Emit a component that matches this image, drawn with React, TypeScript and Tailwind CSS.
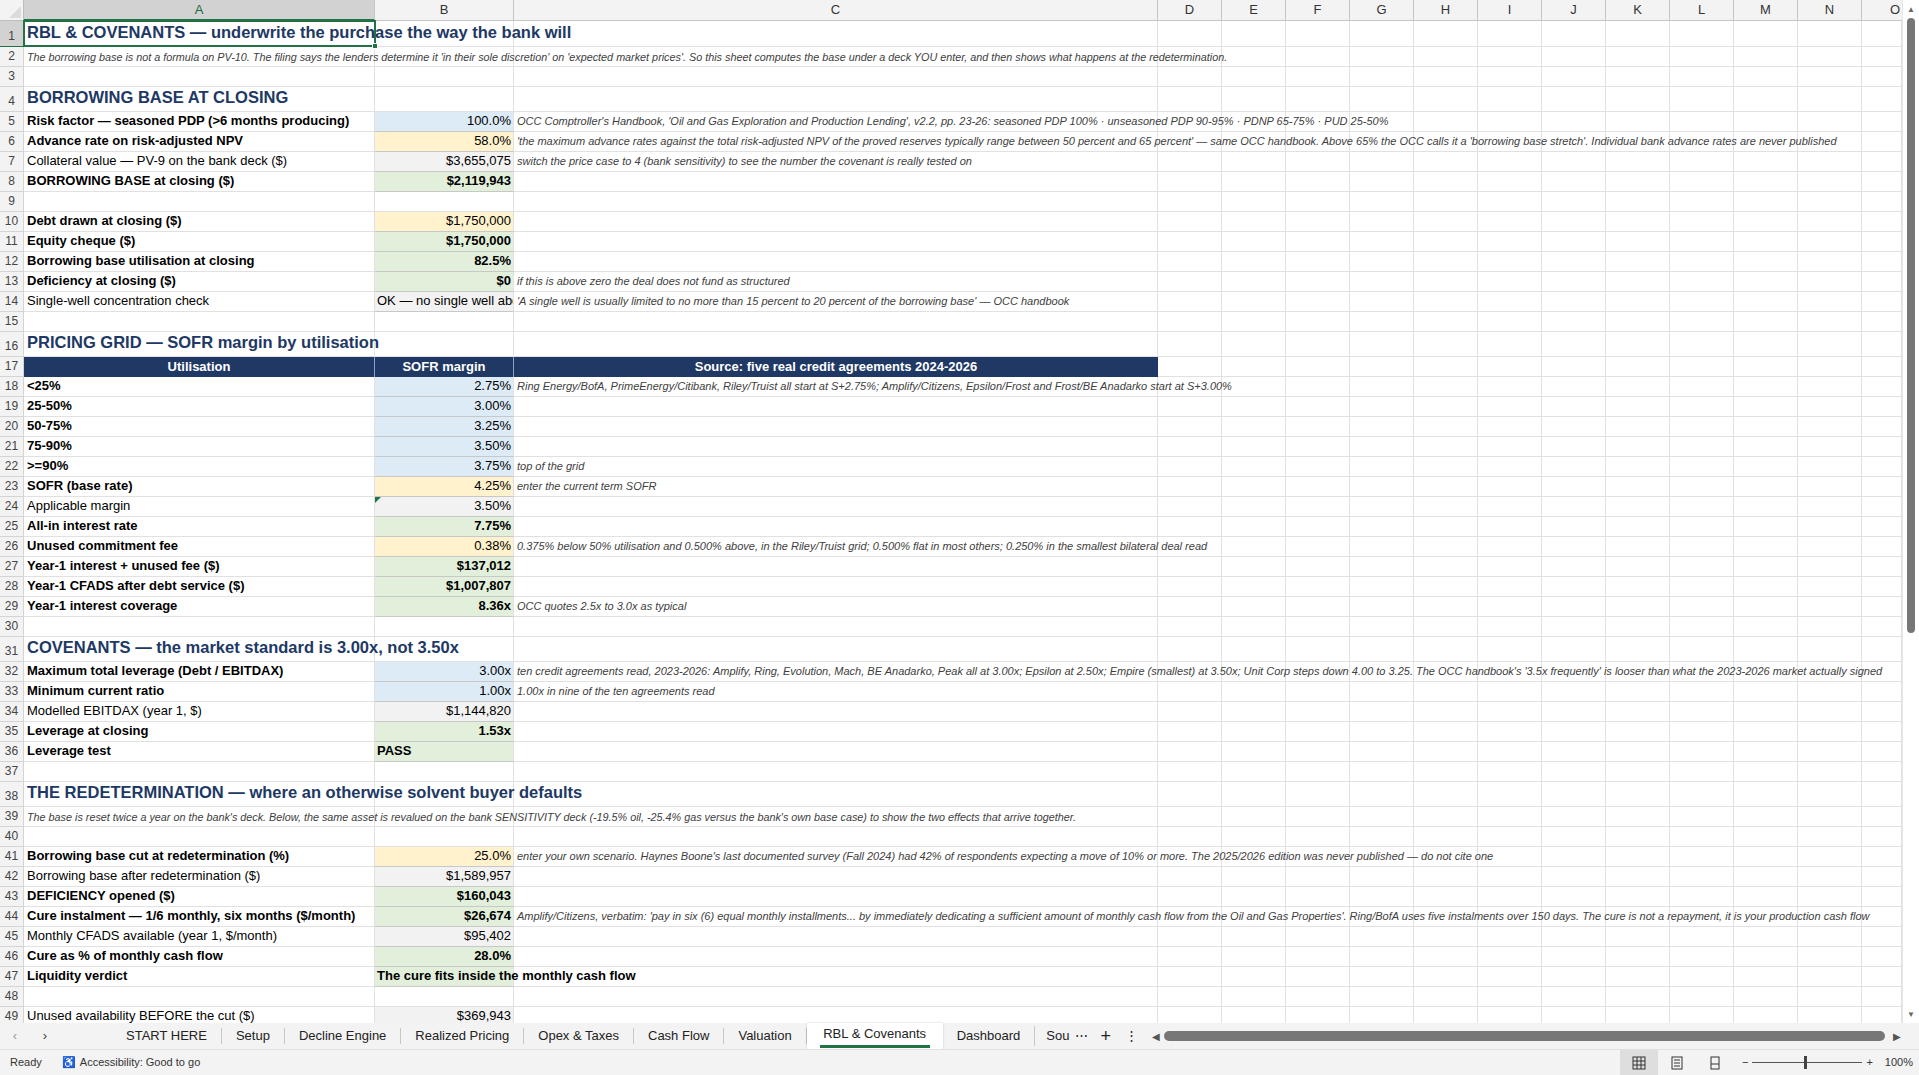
import React from "react";

type R = { n: number; h?: number; a?: string; ab?: boolean; title?: boolean; sub?: boolean; b?: string; bb?: boolean; bg?: string; bl?: boolean; c?: string; hdr?: boolean; tri?: boolean };
const BLUE = "bg-[#ddebf7]", YEL = "bg-[#fff2cc]", GRY = "bg-[#f2f2f2]", GRN = "bg-[#e2efda]";
const rows: R[] = [
  { n: 1, h: 26, a: "RBL & COVENANTS — underwrite the purchase the way the bank will", title: true },
  { n: 2, a: "The borrowing base is not a formula on PV-10. The filing says the lenders determine it 'in their sole discretion' on 'expected market prices'. So this sheet computes the base under a deck YOU enter, and then shows what happens at the redetermination.", sub: true },
  { n: 3 },
  { n: 4, h: 25, a: "BORROWING BASE AT CLOSING", title: true },
  { n: 5, a: "Risk factor — seasoned PDP (>6 months producing)", ab: true, b: "100.0%", bg: BLUE, c: "OCC Comptroller's Handbook, 'Oil and Gas Exploration and Production Lending', v2.2, pp. 23-26: seasoned PDP 100% · unseasoned PDP 90-95% · PDNP 65-75% · PUD 25-50%" },
  { n: 6, a: "Advance rate on risk-adjusted NPV", ab: true, b: "58.0%", bg: YEL, c: "'the maximum advance rates against the total risk-adjusted NPV of the proved reserves typically range between 50 percent and 65 percent' — same OCC handbook. Above 65% the OCC calls it a 'borrowing base stretch'. Individual bank advance rates are never published" },
  { n: 7, a: "Collateral value — PV-9 on the bank deck ($)", b: "$3,655,075", bg: GRY, c: "switch the price case to 4 (bank sensitivity) to see the number the covenant is really tested on" },
  { n: 8, a: "BORROWING BASE at closing ($)", ab: true, b: "$2,119,943", bb: true, bg: GRN },
  { n: 9 },
  { n: 10, a: "Debt drawn at closing ($)", ab: true, b: "$1,750,000", bg: YEL },
  { n: 11, a: "Equity cheque ($)", ab: true, b: "$1,750,000", bb: true, bg: GRN },
  { n: 12, a: "Borrowing base utilisation at closing", ab: true, b: "82.5%", bb: true, bg: GRN },
  { n: 13, a: "Deficiency at closing ($)", ab: true, b: "$0", bb: true, bg: GRN, c: "if this is above zero the deal does not fund as structured" },
  { n: 14, a: "Single-well concentration check", b: "OK — no single well above 20%", bg: GRY, bl: true, c: "'A single well is usually limited to no more than 15 percent to 20 percent of the borrowing base' — OCC handbook" },
  { n: 15 },
  { n: 16, h: 25, a: "PRICING GRID — SOFR margin by utilisation", title: true },
  { n: 17, hdr: true },
  { n: 18, a: "<25%", ab: true, b: "2.75%", bg: BLUE, c: "Ring Energy/BofA, PrimeEnergy/Citibank, Riley/Truist all start at S+2.75%; Amplify/Citizens, Epsilon/Frost and Frost/BE Anadarko start at S+3.00%" },
  { n: 19, a: "25-50%", ab: true, b: "3.00%", bg: BLUE },
  { n: 20, a: "50-75%", ab: true, b: "3.25%", bg: BLUE },
  { n: 21, a: "75-90%", ab: true, b: "3.50%", bg: BLUE },
  { n: 22, a: ">=90%", ab: true, b: "3.75%", bg: BLUE, c: "top of the grid" },
  { n: 23, a: "SOFR (base rate)", ab: true, b: "4.25%", bg: YEL, c: "enter the current term SOFR" },
  { n: 24, a: "Applicable margin", b: "3.50%", bg: GRY, tri: true },
  { n: 25, a: "All-in interest rate", ab: true, b: "7.75%", bb: true, bg: GRN },
  { n: 26, a: "Unused commitment fee", ab: true, b: "0.38%", bg: YEL, c: "0.375% below 50% utilisation and 0.500% above, in the Riley/Truist grid; 0.500% flat in most others; 0.250% in the smallest bilateral deal read" },
  { n: 27, a: "Year-1 interest + unused fee ($)", ab: true, b: "$137,012", bb: true, bg: GRN },
  { n: 28, a: "Year-1 CFADS after debt service ($)", ab: true, b: "$1,007,807", bb: true, bg: GRN },
  { n: 29, a: "Year-1 interest coverage", ab: true, b: "8.36x", bb: true, bg: GRN, c: "OCC quotes 2.5x to 3.0x as typical" },
  { n: 30 },
  { n: 31, h: 25, a: "COVENANTS — the market standard is 3.00x, not 3.50x", title: true },
  { n: 32, a: "Maximum total leverage (Debt / EBITDAX)", ab: true, b: "3.00x", bg: BLUE, c: "ten credit agreements read, 2023-2026: Amplify, Ring, Evolution, Mach, BE Anadarko, Peak all at 3.00x; Epsilon at 2.50x; Empire (smallest) at 3.50x; Unit Corp steps down 4.00 to 3.25. The OCC handbook's '3.5x frequently' is looser than what the 2023-2026 market actually signed" },
  { n: 33, a: "Minimum current ratio", ab: true, b: "1.00x", bg: BLUE, c: "1.00x in nine of the ten agreements read" },
  { n: 34, a: "Modelled EBITDAX (year 1, $)", b: "$1,144,820", bg: GRY },
  { n: 35, a: "Leverage at closing", ab: true, b: "1.53x", bb: true, bg: GRN },
  { n: 36, a: "Leverage test", ab: true, b: "PASS", bb: true, bg: GRN, bl: true },
  { n: 37 },
  { n: 38, h: 25, a: "THE REDETERMINATION — where an otherwise solvent buyer defaults", title: true },
  { n: 39, a: "The base is reset twice a year on the bank's deck. Below, the same asset is revalued on the bank SENSITIVITY deck (-19.5% oil, -25.4% gas versus the bank's own base case) to show the two effects that arrive together.", sub: true },
  { n: 40 },
  { n: 41, a: "Borrowing base cut at redetermination (%)", ab: true, b: "25.0%", bg: YEL, c: "enter your own scenario. Haynes Boone's last documented survey (Fall 2024) had 42% of respondents expecting a move of 10% or more. The 2025/2026 edition was never published — do not cite one" },
  { n: 42, a: "Borrowing base after redetermination ($)", b: "$1,589,957", bg: GRY },
  { n: 43, a: "DEFICIENCY opened ($)", ab: true, b: "$160,043", bb: true, bg: GRN },
  { n: 44, a: "Cure instalment — 1/6 monthly, six months ($/month)", ab: true, b: "$26,674", bb: true, bg: GRN, c: "Amplify/Citizens, verbatim: 'pay in six (6) equal monthly installments... by immediately dedicating a sufficient amount of monthly cash flow from the Oil and Gas Properties'. Ring/BofA uses five instalments over 150 days. The cure is not a repayment, it is your production cash flow" },
  { n: 45, a: "Monthly CFADS available (year 1, $/month)", b: "$95,402", bg: GRY },
  { n: 46, a: "Cure as % of monthly cash flow", ab: true, b: "28.0%", bb: true, bg: GRN },
  { n: 47, a: "Liquidity verdict", ab: true, b: "The cure fits inside the monthly cash flow", bb: true, bg: GRN, bl: true },
  { n: 48 },
  { n: 49, a: "Unused availability BEFORE the cut ($)", b: "$369,943", bg: GRY },
];
const extra = ["D", "E", "F", "G", "H", "I", "J", "K", "L", "M", "N"];
const line = "border-r border-b border-[#e1e1e1]";

function Row({ r }: { r: R }) {
  const h = r.h ?? 20;
  const overB = r.n === 47;
  return (
    <div className="flex" style={{ height: h }}>
      <div className={`w-[24px] shrink-0 flex items-end justify-center pb-[1px] text-[12px] text-[#444] border-r border-b border-[#d4d4d4] ${r.n === 1 ? "bg-[#d2d2d2] text-[#1e6b3c] border-b-[#217346]" : "bg-[#f3f3f3]"}`}>{r.n}</div>
      {r.hdr ? (
        <>
          <div className="w-[351px] shrink-0 bg-[#203864] text-white font-bold text-[13px] flex items-center justify-center border-r border-[#8ea0c0]">Utilisation</div>
          <div className="w-[139px] shrink-0 bg-[#203864] text-white font-bold text-[13px] flex items-center justify-center border-r border-[#8ea0c0]">SOFR margin</div>
          <div className="w-[644px] shrink-0 bg-[#203864] text-white font-bold text-[13px] flex items-center justify-center">Source: five real credit agreements 2024-2026</div>
        </>
      ) : (
        <>
          <div className={`w-[351px] shrink-0 relative ${line}`}>
            {r.a && (
              <div className={`absolute left-[3px] bottom-[1px] whitespace-nowrap z-10 ${r.title ? "text-[16.5px] font-bold text-[#203864]" : r.sub ? "text-[10.8px] italic text-[#404040]" : `text-[13px] text-black ${r.ab ? "font-bold" : ""}`}`}>{r.a}</div>
            )}
            {r.n === 1 && <div className="absolute -left-[1px] -top-[1px] w-[353px] h-[27px] border-2 border-[#217346] z-20"><div className="absolute -right-[4px] -bottom-[4px] w-[6px] h-[6px] bg-[#217346] border border-white" /></div>}
          </div>
          <div className={`w-[139px] shrink-0 relative ${line} ${r.bg ?? ""} ${r.bg ? "border-b-[#c8c8c8]" : ""} ${overB ? "" : "overflow-hidden"}`}>
            {r.tri && <div className="absolute left-0 top-0 w-0 h-0 border-t-[6px] border-r-[6px] border-t-[#217346] border-r-transparent" />}
            {r.b && (
              <div className={`absolute bottom-[1px] whitespace-nowrap text-[13px] z-10 ${r.bl ? "left-[2px]" : "right-[2px]"} ${r.bb ? "font-bold" : ""}`}>{r.b}</div>
            )}
          </div>
          <div className={`w-[644px] shrink-0 relative ${line}`}>
            {r.c && <div className="absolute left-[3px] bottom-[2px] whitespace-nowrap text-[11px] italic text-[#404040] z-10">{r.c}</div>}
          </div>
        </>
      )}
      {extra.map((e) => <div key={e} className={`w-[64px] shrink-0 ${line}`} />)}
      <div className={`w-[40px] shrink-0 ${line}`} />
    </div>
  );
}

export default function App() {
  const tabs = ["START HERE", "Setup", "Decline Engine", "Realized Pricing", "Opex & Taxes", "Cash Flow", "Valuation"];
  return (
    <div className="w-[1919px] h-[1075px] overflow-hidden bg-white flex flex-col" style={{ fontFamily: '"Liberation Sans", Arial, sans-serif' }}>
      <div className="flex flex-1 min-h-0">
        <div className="flex-1 overflow-hidden">
          <div className="flex h-[21px] bg-[#f3f3f3] text-[13px] text-[#333]">
            <div className="w-[24px] shrink-0 border-r border-b border-[#bdbdbd] relative overflow-hidden">
              <div className="absolute right-[2px] bottom-[2px] w-0 h-0 border-l-[12px] border-b-[12px] border-l-transparent border-b-[#dcdcdc]" />
            </div>
            <div className="w-[351px] shrink-0 flex items-center justify-center bg-[#d2d2d2] text-[#1e6b3c] border-r border-[#c6c6c6] border-b-2 border-b-[#217346]">A</div>
            <div className="w-[139px] shrink-0 flex items-center justify-center border-r border-b border-[#c6c6c6]">B</div>
            <div className="w-[644px] shrink-0 flex items-center justify-center border-r border-b border-[#c6c6c6]">C</div>
            {extra.map((e) => <div key={e} className="w-[64px] shrink-0 flex items-center justify-center border-r border-b border-[#c6c6c6]">{e}</div>)}
            <div className="w-[40px] shrink-0 flex items-center justify-end pr-[2px] border-b border-[#c6c6c6]">O</div>
          </div>
          {rows.map((r) => <Row key={r.n} r={r} />)}
        </div>
        <div className="w-[17px] shrink-0 bg-white flex flex-col items-center border-l border-[#e6e6e6]">
          <div className="text-[8px] text-[#666] mt-[4px]">▲</div>
          <div className="w-[8px] h-[615px] bg-[#777] rounded-full mt-[2px]" />
          <div className="flex-1" />
          <div className="text-[8px] text-[#666] mb-[2px]">▼</div>
        </div>
      </div>
      <div className="h-[26px] flex items-center bg-[#f3f3f3] text-[13px] text-[#222] shrink-0">
        <span className="w-[30px] text-center text-[#999]">‹</span>
        <span className="w-[30px] text-center text-[#444]">›</span>
        <div className="w-[52px]" />
        {tabs.map((t) => (
          <div key={t} className="px-[14px] border-r border-[#c8c8c8] leading-[16px]">{t}</div>
        ))}
        <div className="px-[13px] h-[26px] flex flex-col items-center justify-center bg-white shadow-[0_0_2px_rgba(0,0,0,0.2)] font-medium">
          <span>RBL &amp; Covenants</span>
          <div className="w-[110px] h-[3px] bg-[#217346] mt-[2px]" />
        </div>
        <div className="px-[14px] border-r border-[#c8c8c8]">Dashboard</div>
        <div className="pl-[11px] pr-[6px]">Sou</div>
        <span className="text-[13px] mr-[12px]">⋯</span>
        <span className="text-[18px] mr-[14px] font-light">+</span>
        <span className="mr-[14px]">⋮</span>
        <span className="text-[10px] text-[#555] mr-[4px]">◀</span>
        <div className="flex-1 h-[10px] bg-[#777] rounded-full mr-[8px]" />
        <span className="text-[10px] text-[#555] mr-[18px]">▶</span>
      </div>
      <div className="h-[26px] flex items-center bg-[#f3f3f3] text-[11px] text-[#333] shrink-0 border-t border-[#e0e0e0]">
        <span className="ml-[10px] mr-[20px]">Ready</span>
        <span className="mr-[4px]">♿</span>
        <span>Accessibility: Good to go</span>
        <div className="flex-1" />
        <div className="w-[38px] h-[26px] bg-[#dedede] flex items-center justify-center">
          <svg width="14" height="14" viewBox="0 0 14 14" fill="none" stroke="#333"><rect x="1" y="1" width="12" height="12"/><path d="M1 5h12M1 9h12M5 1v12M9 1v12"/></svg>
        </div>
        <div className="w-[38px] flex justify-center"><svg width="14" height="14" viewBox="0 0 14 14" fill="none" stroke="#333"><rect x="2" y="1" width="10" height="12"/><path d="M4 4h6M4 7h6M4 10h6"/></svg></div>
        <div className="w-[38px] flex justify-center"><svg width="14" height="14" viewBox="0 0 14 14" fill="none" stroke="#333"><rect x="3" y="1" width="8" height="12"/><path d="M3 8h8"/></svg></div>
        <span className="ml-[8px]">−</span>
        <div className="w-[110px] h-[1px] bg-[#555] mx-[4px] relative"><div className="absolute left-[52px] -top-[6px] w-[3px] h-[13px] bg-[#444]" /></div>
        <span>+</span>
        <span className="ml-[12px] mr-[6px]">100%</span>
      </div>
    </div>
  );
}
